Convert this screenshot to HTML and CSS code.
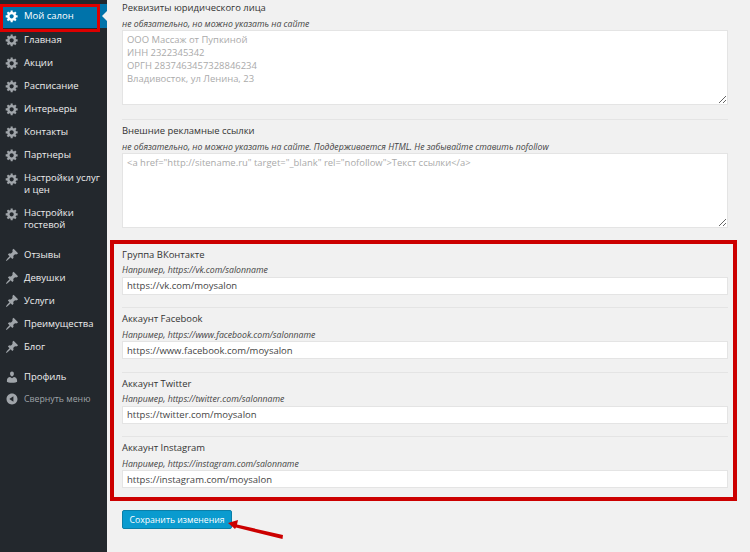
FILE: index.html
```html
<!DOCTYPE html>
<html lang="ru">
<head>
<meta charset="utf-8">
<title>Мой салон</title>
<link rel="stylesheet" href="styles.css">
</head>
<body>
<svg class="defs" width="0" height="0" aria-hidden="true">
  <symbol id="gear" viewBox="0 0 20 20"><path fill-rule="evenodd" d="M18 12h-2.18c-.17.7-.44 1.35-.81 1.93l1.54 1.54-2.1 2.1-1.54-1.54c-.58.36-1.23.63-1.91.79V19H8v-2.18c-.68-.16-1.33-.43-1.91-.79l-1.54 1.54-2.12-2.12 1.54-1.54c-.36-.58-.63-1.23-.79-1.91H1V9.03h2.17c.16-.7.44-1.35.8-1.94L2.43 5.55l2.1-2.1 1.54 1.54c.58-.37 1.24-.64 1.93-.81V2h3v2.18c.68.16 1.33.43 1.91.79l1.54-1.54 2.12 2.12-1.54 1.54c.36.59.64 1.24.8 1.94H18V12zm-8.5 1.5c1.66 0 3-1.34 3-3s-1.34-3-3-3-3 1.34-3 3 1.34 3 3 3z"/></symbol>
  <symbol id="pin" viewBox="0 0 20 20"><path d="M10.44 3.02l1.82-1.82 6.36 6.35-1.83 1.82c-1.05-.68-2.48-.57-3.41.36l-.75.75c-.92.93-1.04 2.35-.35 3.41l-1.83 1.82-2.41-2.41-2.8 2.79c-.42.42-3.38 2.71-3.8 2.29s1.86-3.39 2.28-3.81l2.79-2.79L4.1 9.36l1.83-1.82c1.05.69 2.48.57 3.4-.36l.75-.75c.93-.92 1.05-2.35.36-3.41z"/></symbol>
  <symbol id="user" viewBox="0 0 20 20"><path d="M10 9.25c-2.27 0-2.73-3.44-2.73-3.44C7 4.02 7.82 2 9.97 2c2.16 0 2.98 2.02 2.71 3.81 0 0-.41 3.44-2.68 3.44zm0 2.57L12.72 10c2.39 0 4.52 2.33 4.52 4.53v2.49s-3.65 1.13-7.24 1.13c-3.65 0-7.24-1.13-7.24-1.13v-2.49c0-2.25 1.94-4.48 4.47-4.48z"/></symbol>
  <symbol id="collapse" viewBox="0 0 20 20"><path fill-rule="evenodd" d="M10 2.16c4.33 0 7.84 3.51 7.84 7.84s-3.51 7.84-7.84 7.84S2.16 14.33 2.16 10 5.71 2.16 10 2.16zm2 11.72V6.12L6.18 9.97z"/></symbol>
</svg>
<div class="app">
  <nav class="side">
    <a class="item active"><svg class="ico"><use href="#gear"/></svg><span>Мой салон</span></a>
    <a class="item"><svg class="ico"><use href="#gear"/></svg><span>Главная</span></a>
    <a class="item"><svg class="ico"><use href="#gear"/></svg><span>Акции</span></a>
    <a class="item"><svg class="ico"><use href="#gear"/></svg><span>Расписание</span></a>
    <a class="item"><svg class="ico"><use href="#gear"/></svg><span>Интерьеры</span></a>
    <a class="item"><svg class="ico"><use href="#gear"/></svg><span>Контакты</span></a>
    <a class="item"><svg class="ico"><use href="#gear"/></svg><span>Партнеры</span></a>
    <a class="item two"><svg class="ico"><use href="#gear"/></svg><span>Настройки услуг<br>и цен</span></a>
    <a class="item two"><svg class="ico"><use href="#gear"/></svg><span>Настройки<br>гостевой</span></a>
    <div class="sep"></div>
    <a class="item"><svg class="ico"><use href="#pin"/></svg><span>Отзывы</span></a>
    <a class="item"><svg class="ico"><use href="#pin"/></svg><span>Девушки</span></a>
    <a class="item"><svg class="ico"><use href="#pin"/></svg><span>Услуги</span></a>
    <a class="item"><svg class="ico"><use href="#pin"/></svg><span>Преимущества</span></a>
    <a class="item"><svg class="ico"><use href="#pin"/></svg><span>Блог</span></a>
    <div class="sep small"></div>
    <a class="item"><svg class="ico"><use href="#user"/></svg><span>Профиль</span></a>
    <a class="item collapse"><svg class="ico"><use href="#collapse"/></svg><span>Свернуть меню</span></a>
  </nav>
  <main class="main">
    <section class="field area first">
      <label class="lbl">Реквизиты юридического лица</label>
      <p class="hint">не обязательно, но можно указать на сайте</p>
      <textarea class="ta" readonly>ООО Массаж от Пупкиной
ИНН 2322345342
ОРГН 2837463457328846234
Владивосток, ул Ленина, 23</textarea>
    </section>
    <section class="field area last">
      <label class="lbl">Внешние рекламные ссылки</label>
      <p class="hint">не обязательно, но можно указать на сайте. Поддерживается HTML. Не забывайте ставить nofollow</p>
      <textarea class="ta" readonly>&lt;a href="http://sitename.ru" target="_blank" rel="nofollow"&gt;Текст ссылки&lt;/a&gt;</textarea>
    </section>
    <section class="field">
      <label class="lbl">Группа ВКонтакте</label>
      <p class="hint">Например, https://vk.com/salonname</p>
      <input class="inp" value="https://vk.com/moysalon" readonly>
    </section>
    <section class="field">
      <label class="lbl">Аккаунт Facebook</label>
      <p class="hint">Например, https://www.facebook.com/salonname</p>
      <input class="inp" value="https://www.facebook.com/moysalon" readonly>
    </section>
    <section class="field">
      <label class="lbl">Аккаунт Twitter</label>
      <p class="hint">Например, https://twitter.com/salonname</p>
      <input class="inp" value="https://twitter.com/moysalon" readonly>
    </section>
    <section class="field end">
      <label class="lbl">Аккаунт Instagram</label>
      <p class="hint">Например, https://instagram.com/salonname</p>
      <input class="inp" value="https://instagram.com/moysalon" readonly>
    </section>
    <button class="save" type="button">Сохранить изменения</button>
  </main>
</div>
<div class="frame-menu"></div>
<div class="frame-fields"></div>
<svg class="arrow" width="56" height="26" viewBox="0 0 56 26" aria-hidden="true"><path d="M0 8 L10 5 L9 9.5 L55 20 L54.5 24 L8 12.5 L7 14 Z" fill="#cc0000"/></svg>
</body>
</html>
```
FILE: styles.css
```css
* { box-sizing: border-box; }
html, body { margin: 0; height: 100%; overflow: hidden; }
body { background: #f1f1f1; font-family: "Open Sans", sans-serif; font-size: 10px; color: #444; position: relative; }
.defs { position: absolute; }
.app { display: flex; height: 552px; }
.side { width: 107px; flex: none; background: #23282d; padding-top: 4px; }
.item { display: flex; align-items: center; gap: 5px; height: 23px; padding-left: 5px; color: #eee; font-size: 9.5px; line-height: 12px; position: relative; }
.item.two { height: 35px; align-items: flex-start; padding-top: 6px; }
.ico { width: 14px; height: 14px; flex: none; fill: #a0a5aa; }
.active { background: #0073aa; color: #fff; height: 24px; }
.active .ico { fill: #fff; }
.active::after { content: ""; position: absolute; right: 0; top: 7px; border: 5px solid transparent; border-right-color: #f1f1f1; border-left: 0; }
.sep { height: 7px; }
.sep.small { height: 7px; }
.collapse { color: #a0a5aa; font-size: 8.75px; height: 21px; }
.main { flex: 1; padding: 0 22px 0 15px; }
.field { height: 64.5px; border-bottom: 1px solid #e4e4e4; padding-top: 4px; }
.field.end { border-bottom: 0; }
.area { height: 119.5px; }
.area.first { padding-top: 1px; }
.area.last { height: 124px; padding-top: 4.5px; border-bottom: 0; }
.lbl { display: block; font-size: 9.45px; line-height: 14px; color: #333; }
.hint { margin: 2.5px 0 .5px; font-size: 8.7px; line-height: 12px; font-style: italic; color: #444; }
.ta { display: block; width: 100%; height: 75px; padding: 2px 4px; font: 9.45px/13px "Open Sans", sans-serif; color: #aaa; background: #fff; border: 1px solid #e4e4e4; border-radius: 0; outline: 0; }
.inp { display: block; width: 100%; height: 18px; padding: 0 4px; font: 9.5px "Open Sans", sans-serif; color: #444; background: #fff; border: 1px solid #e4e4e4; outline: 0; }
.save { display: block; margin-top: 8.5px; width: 110px; height: 19px; padding: 0; font: 8.7px "Open Sans", sans-serif; color: #fff; background: #0a9bcf; border: 1px solid #0a7fa8; border-radius: 2px; }
.frame-menu { position: absolute; left: 0; top: 4px; width: 100px; height: 28px; border: 3px solid #dd0000; }
.frame-fields { position: absolute; left: 110px; top: 240px; width: 627px; height: 261px; border: 4px solid #cc0000; }
.arrow { position: absolute; left: 228px; top: 515px; }
```
